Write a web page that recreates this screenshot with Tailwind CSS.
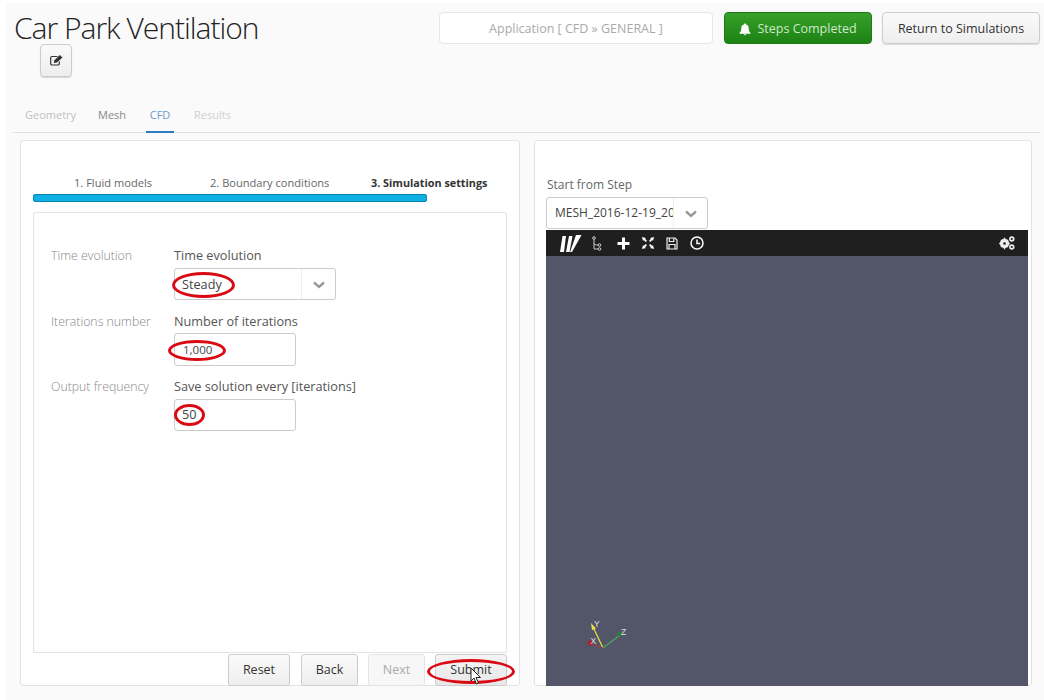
<!DOCTYPE html>
<html lang="en">
<head>
  <meta charset="UTF-8" />
  <title>Car Park Ventilation</title>
  <script src="https://cdn.jsdelivr.net/npm/@tailwindcss/browser@4"></script>
</head>
<body class="bg-white font-['Open_Sans',sans-serif] text-[#444]">
  <div class="w-[1044px] h-[700px] overflow-hidden pt-[3px] pl-[6px]">
    <div class="bg-[#fafafa] h-[697px] pl-[7px] pr-[4px] flex flex-col">

      <!-- header -->
      <div class="flex justify-between pt-[9px] h-[41px]">
        <h1 class="text-[30px] leading-[32px] font-light text-[#222] tracking-[-1px] pl-px">Car Park Ventilation</h1>
        <div class="flex">
          <div class="w-[274px] h-[32px] pt-[2px] border border-[#e6e6e6] bg-white rounded flex items-center justify-center text-[12.5px] text-[#aaa]">Application [ CFD » GENERAL ]</div>
          <button class="ml-[11px] w-[148px] h-[32px] pt-[2px] rounded border border-[#1f7a14] bg-gradient-to-b from-[#36a12a] to-[#1d8214] text-[#cfe8cb] text-[12.5px] flex items-center justify-center gap-[6px]">
            <svg class="w-[12px] h-[13px]" viewBox="0 0 12 13" fill="#fff"><path d="M6 0.5c-.6 0-1 .4-1 1C3.2 2 2.3 3.4 2.3 5c0 3-1 4-1.8 5v.8h11V10c-.8-1-1.8-2-1.8-5 0-1.600-.9-3-2.700-3.500 0-.6-.4-1-1-1zM4.600 11.300a1.500 1.500 0 0 0 2.800 0z"/></svg>
            Steps Completed
          </button>
          <button class="ml-[10px] w-[158px] h-[32px] pt-[2px] rounded border border-[#ccc] bg-gradient-to-b from-[#fafafa] to-[#eee] text-[12.5px] text-[#333] shadow-[0_1px_1px_rgba(0,0,0,0.12)]">Return to Simulations</button>
        </div>
      </div>

      <div class="pl-[27px]">
        <button class="w-[32px] h-[33px] rounded border border-[#ccc] bg-gradient-to-b from-[#fafafa] to-[#eee] flex items-center justify-center shadow-[0_1px_1px_rgba(0,0,0,0.15)]">
          <svg class="w-[13px] h-[11px]" viewBox="0 0 13 11" fill="none" stroke="#333" stroke-width="1.200"><path d="M7.500 1.500H2a1.300 1.300 0 0 0-1.300 1.300V8.700A1.300 1.300 0 0 0 2 10h6a1.300 1.300 0 0 0 1.300-1.300V6.500"/><path d="M3.800 8l.6-2.700L9.800 0l2.700 2.500-5.500 5z" fill="#333" stroke="none"/></svg>
        </button>
      </div>

      <!-- tabs -->
      <div class="mt-[27px] h-[29px] pt-[3px] border-b border-[#e3e3e3] flex text-[11px] leading-[16px] pl-[12px]">
        <span class="text-[#c0c0c0] w-[73px]">Geometry</span>
        <span class="text-[#888] w-[52px]">Mesh</span>
        <div class="w-[28px] -ml-[4px] h-[26px] border-b-2 border-[#2b7cc4] text-[#6d9cc9] text-center">CFD</div>
        <span class="text-[#cfcfcf] ml-[20px]">Results</span>
      </div>

      <!-- panels -->
      <div class="flex gap-[14px] mt-[7px] pl-[7px]">

        <div class="relative w-[500px] h-[546px] bg-white border border-[#e3e3e3] rounded-[3px] px-[12px] pt-[34px]">
          <div class="flex text-[11.100px] leading-[16px] text-[#666] h-[19px]">
            <span class="ml-[41px] w-[136px]">1. Fluid models</span>
            <span class="w-[161px]">2. Boundary conditions</span>
            <span class="font-bold text-[#333] text-[10.800px]">3. Simulation settings</span>
          </div>
          <div class="w-[394px] h-[8px] rounded-[2px] bg-[#0fb0e4] border border-[#0a86b5]"></div>
          <div class="mt-[10px] w-[474px] h-[441px] border border-[#e3e3e3] rounded-t-[2px] pt-[34px] pl-[17px] text-[12.700px]">
            <div class="flex h-[66px]">
              <span class="w-[123px] leading-[17px] text-[12.300px] font-light text-[#888]">Time evolution</span>
              <div>
                <div class="leading-[17px] text-[#555]">Time evolution</div>
                <div class="relative mt-[4px] w-[162px] h-[32px] pt-[2px] border border-[#ccc] rounded-[3px] flex items-center pl-[7px] text-[#444]">
                  Steady
                  <span class="absolute right-[33px] top-0 h-full border-l border-[#eee]"></span>
                  <svg class="absolute right-[10px] top-[12px] w-[12px] h-[8px]" viewBox="0 0 12 8" fill="none" stroke="#999" stroke-width="2.400"><path d="M1 1.500l5 4.500 5-4.500"/></svg>
                  <span class="absolute -left-[3px] top-[3px] w-[63px] h-[26px] rounded-[50%] border-[3px] border-[#d90a12]"></span>
                </div>
              </div>
            </div>
            <div class="flex h-[65px]">
              <span class="w-[123px] leading-[17px] text-[12.300px] font-light text-[#888]">Iterations number</span>
              <div>
                <div class="leading-[17px] text-[#555]">Number of iterations</div>
                <div class="relative mt-[3px] w-[122px] h-[33px] border border-[#ccc] rounded-[3px] flex items-center pl-[8px] text-[11.500px] text-[#444]">
                  1,000
                  <span class="absolute -left-[7px] top-[6px] w-[58px] h-[21px] rounded-[50%] border-[3px] border-[#d90a12]"></span>
                </div>
              </div>
            </div>
            <div class="flex">
              <span class="w-[123px] leading-[17px] text-[12.300px] font-light text-[#888]">Output frequency</span>
              <div>
                <div class="leading-[17px] text-[#555]">Save solution every [iterations]</div>
                <div class="relative mt-[4px] w-[122px] h-[32px] border border-[#ccc] rounded-[3px] flex items-center pl-[7px] text-[#444]">
                  50
                  <span class="absolute -left-px top-[4px] w-[31px] h-[22px] rounded-[50%] border-[3px] border-[#d90a12]"></span>
                </div>
              </div>
            </div>
          </div>
          <div class="relative flex justify-end mt-px pr-0 text-[12.500px]">
            <button class="w-[62px] h-[32px] rounded-[3px] border border-[#ccc] bg-gradient-to-b from-[#fafafa] to-[#eee] text-[#333]">Reset</button>
            <button class="ml-[11px] w-[57px] h-[32px] rounded-[3px] border border-[#ccc] bg-gradient-to-b from-[#fafafa] to-[#eee] text-[#333]">Back</button>
            <button class="ml-[10px] w-[57px] h-[32px] rounded-[3px] border border-[#e4e4e4] bg-[#f7f7f7] text-[#aaa]">Next</button>
            <button class="ml-[10px] w-[72px] h-[32px] rounded-[3px] border border-[#ccc] bg-gradient-to-b from-[#f4f4f4] to-[#e8e8e8] text-[#333]">Submit</button>
            <span class="absolute left-[394px] top-[5px] w-[88px] h-[25px] rounded-[50%] border-[3px] border-[#d90a12]"></span>
            <svg class="absolute left-[437px] top-[13px] w-[13px] h-[19px]" viewBox="0 0 13 19" fill="#fff" stroke="#222" stroke-width="1"><path d="M1 1v13l3-3 2.500 6 2-1-2.500-5.500h4.500z"/></svg>
          </div>
        </div>

        <div class="w-[498px] h-[546px] bg-white border border-[#e3e3e3] rounded-[3px] pl-[11px] pr-[3px] pt-[35px]">
          <div class="pl-px text-[12px] leading-[17px] text-[#666]">Start from Step</div>
          <div class="relative mt-[4px] w-[162px] h-[32px] border border-[#ccc] rounded-[3px] flex items-center pl-[8px] text-[12px] text-[#444] overflow-hidden">
            <span class="w-[119px] overflow-hidden whitespace-nowrap">MESH_2016-12-19_20</span>
            <span class="absolute right-[33px] top-0 h-full border-l border-[#eee]"></span>
            <svg class="absolute right-[10px] top-[12px] w-[12px] h-[8px]" viewBox="0 0 12 8" fill="none" stroke="#999" stroke-width="2.400"><path d="M1 1.500l5 4.500 5-4.500"/></svg>
          </div>
          <div class="relative mt-px w-[482px] h-[456px] bg-[#535669]">
            <div class="h-[26px] bg-[#1f1f1f] flex items-center pl-[14px] pr-[13px]">
              <svg class="w-[22px] h-[17px]" viewBox="0 0 22 17" fill="#fff"><path d="M2.500 1h3.500L4 17H0zM9 1h3.500L9.500 17H6zM16 0h5.500L12 17h-2z"/></svg>
              <svg class="ml-[9px] w-[12px] h-[15px]" viewBox="0 0 12 15" fill="none" stroke="#ccc" stroke-width="1"><circle cx="3" cy="2" r="1.300"/><path d="M3 3.300V13h4M3 7.500c0 1.500 2 1.500 4 1.500"/><circle cx="8.500" cy="9" r="1.300"/><circle cx="8.500" cy="13" r="1.300"/></svg>
              <svg class="ml-[14px] w-[13px] h-[13px]" viewBox="0 0 13 13" fill="#fff"><path d="M5 .5h3V5h4.500v3H8v4.500H5V8H.5V5H5z"/></svg>
              <svg class="ml-[11px] w-[14px] h-[14px]" viewBox="0 0 14 14" fill="#fff"><path d="M1 1l4 1-1 .8 2 2-1.200 1.200-2-2L2 5zM13 1l-1 4-.8-1-2 2L8 4.800l2-2L9 2zM1 13l1-4 .8 1 2-2L6 9.200l-2 2 1 .8zM13 13l-4-1 1-.8-2-2L9.200 8l2 2 .8-1z"/></svg>
              <svg class="ml-[11px] w-[12px] h-[13px]" viewBox="0 0 12 13" fill="none" stroke="#eee" stroke-width="1.200"><path d="M1 1h8l2 2v9H1zM3.300 1v3.500h4.500V1M3 12V7.500h6V12"/></svg>
              <svg class="ml-[12px] w-[14px] h-[14px]" viewBox="0 0 14 14" fill="none" stroke="#fff" stroke-width="1.500"><circle cx="7" cy="7" r="6"/><path d="M7 3.500V7.500h3.200"/></svg>
              <svg class="ml-auto w-[16px] h-[14px]" viewBox="0 0 16 14" fill="#eee"><circle cx="5.500" cy="7.500" r="3.200" fill="none" stroke="#eee" stroke-width="3"/><path d="M5.500 1.800v11.400M.2 7.500h10.600M2 4l7 7M9 4l-7 7" stroke="#eee" stroke-width="1.400"/><circle cx="5.500" cy="7.500" r="1.300" fill="#1f1f1f"/><circle cx="12.800" cy="3" r="1.900" fill="none" stroke="#eee" stroke-width="1.600"/><circle cx="12.800" cy="11" r="1.900" fill="none" stroke="#eee" stroke-width="1.600"/></svg>
            </div>
            <svg class="absolute left-[36px] top-[386px] w-[50px] h-[38px]" viewBox="0 0 50 38" fill="none">
              <path d="M21 32L11 11" stroke="#e8e24a" stroke-width="1.200"/>
              <path d="M9 7l5 5.500-4 1.500z" fill="#e8e24a"/>
              <path d="M21 32l17-13" stroke="#4ca85a" stroke-width="1.200"/>
              <circle cx="38" cy="18" r="2.500" fill="#2c7d3c"/>
              <path d="M21 32l-12-4" stroke="#a33a48" stroke-width="1.200"/>
              <circle cx="8" cy="27" r="2.500" fill="#b3202c"/>
              <text x="12" y="11" fill="#ddd" font-size="8.500" font-family="Liberation Sans, sans-serif">Y</text>
              <text x="39" y="19" fill="#ddd" font-size="8.500" font-family="Liberation Sans, sans-serif">Z</text>
              <text x="8.500" y="28" fill="#ddd" font-size="8.500" font-family="Liberation Sans, sans-serif">X</text>
            </svg>
          </div>
        </div>

      </div>
    </div>
  </div>
</body>
</html>
